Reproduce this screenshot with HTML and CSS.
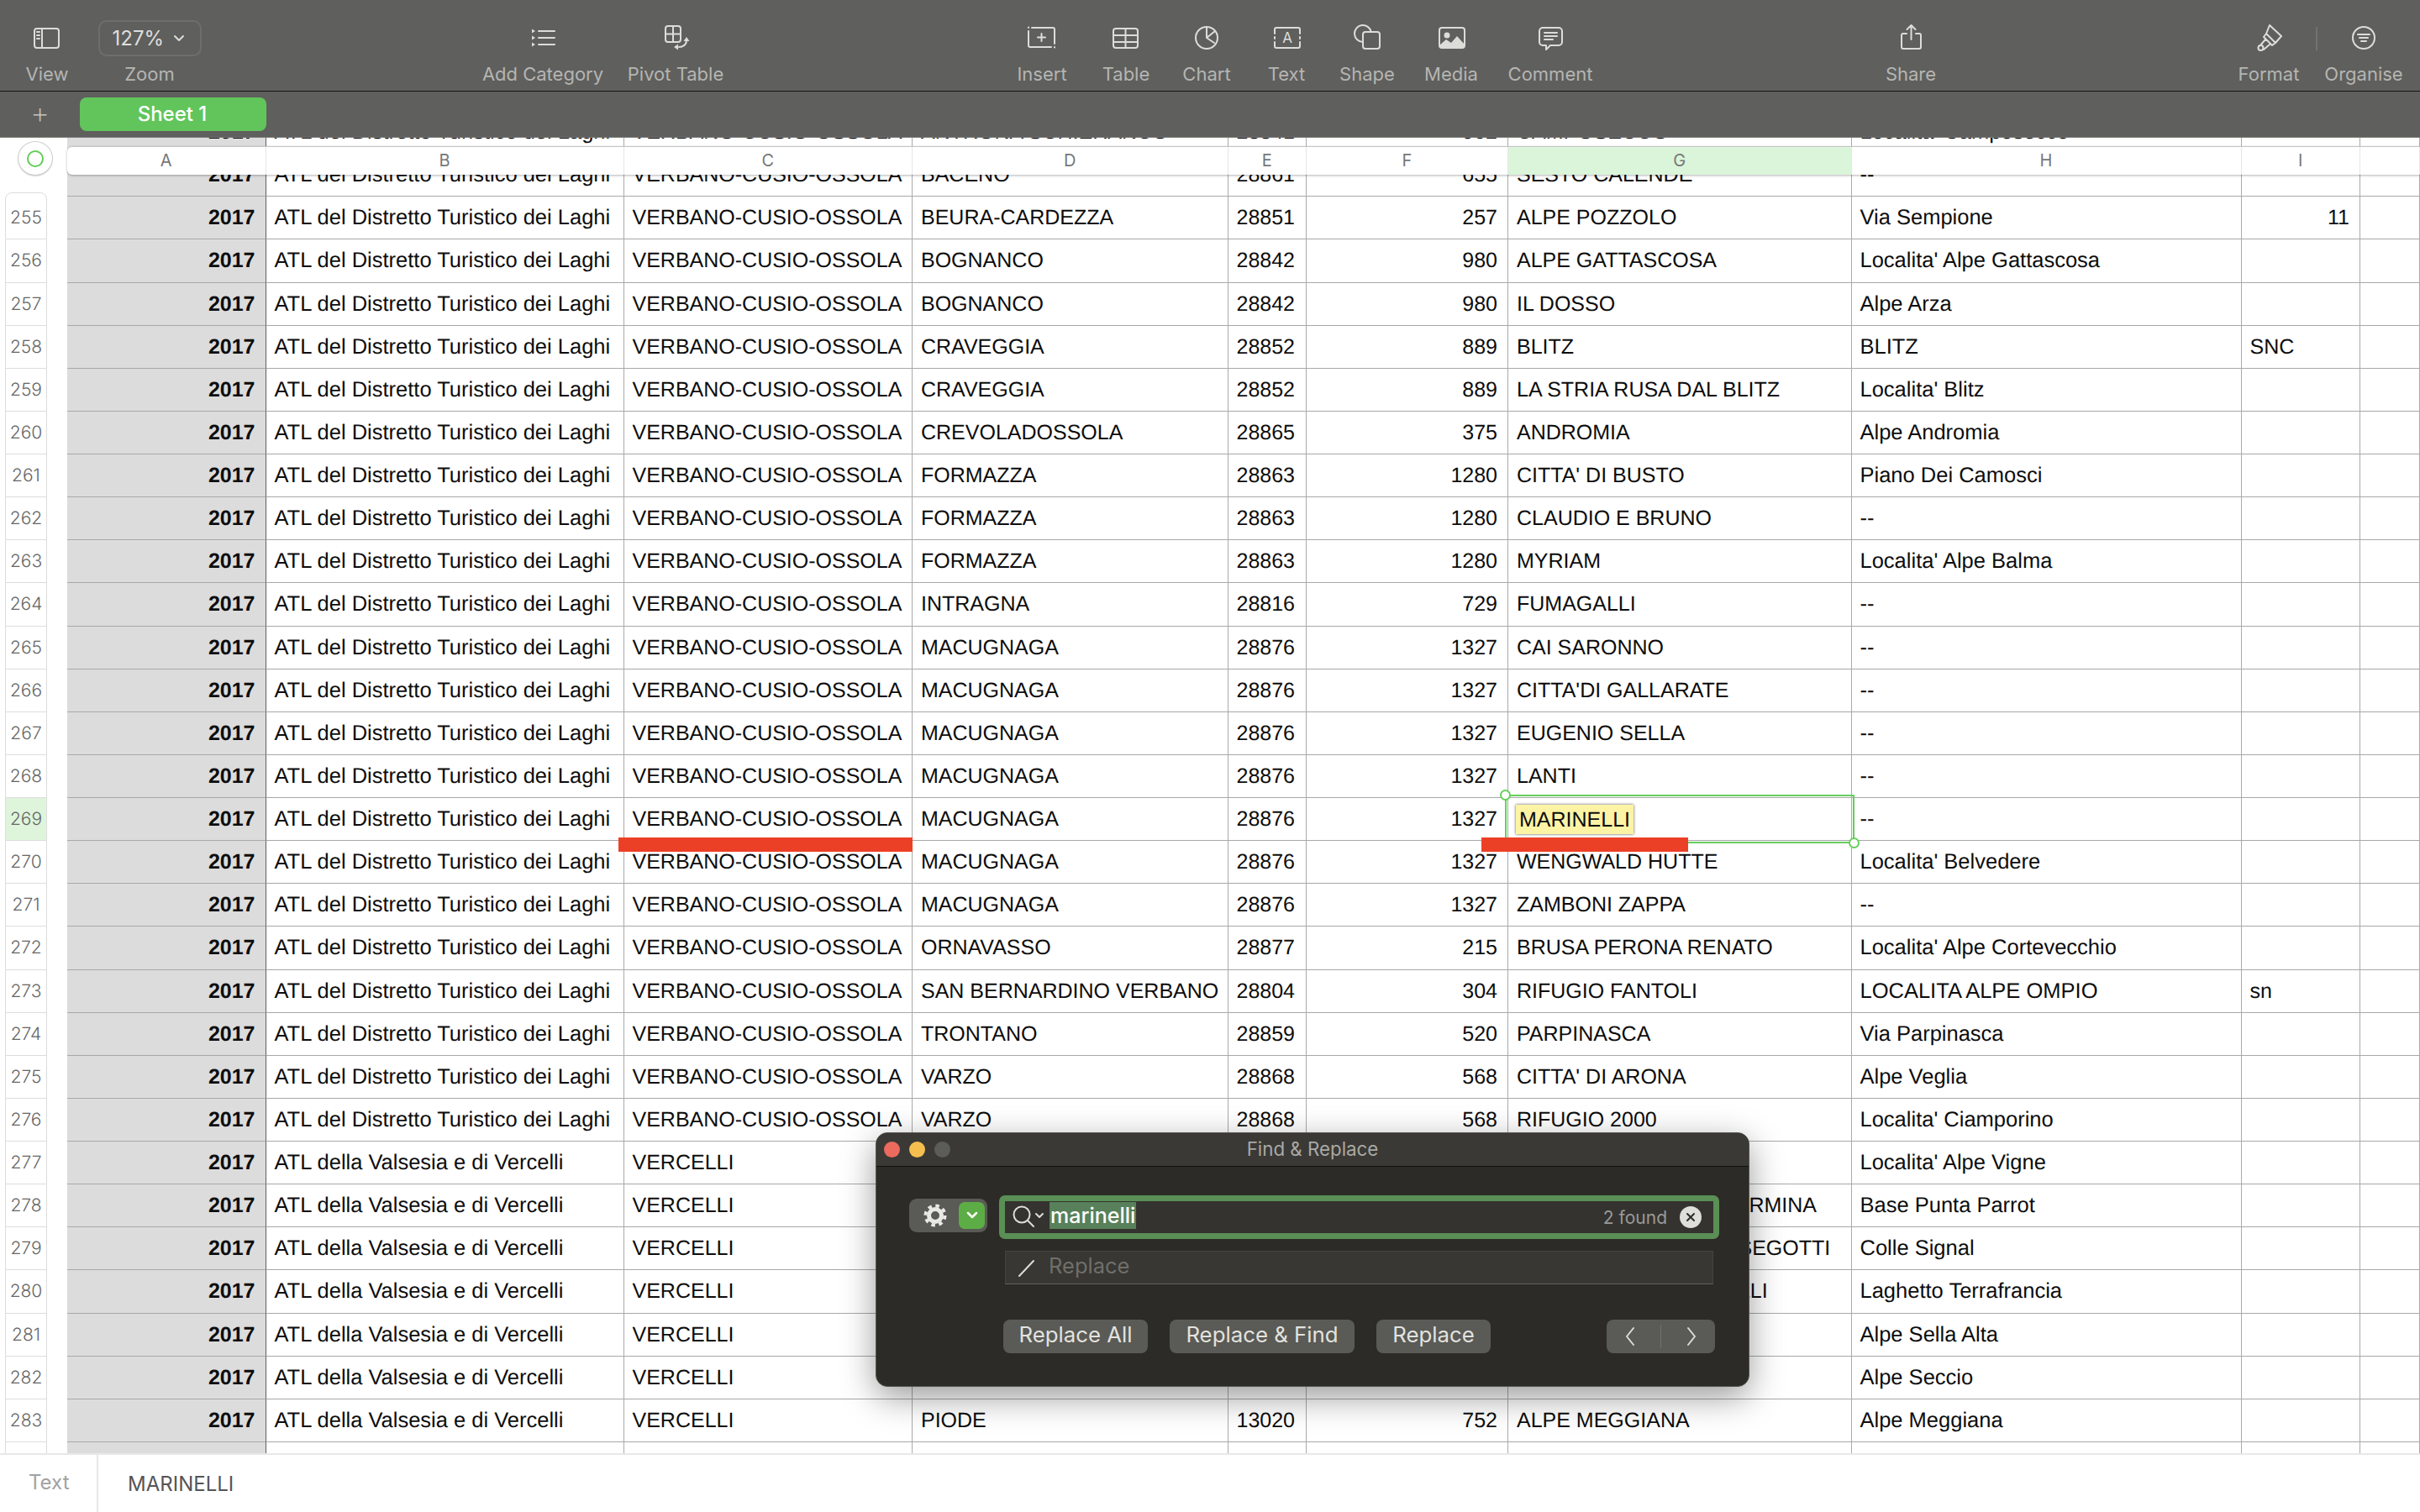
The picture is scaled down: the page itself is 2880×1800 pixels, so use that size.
FILE: index.html
```html
<!DOCTYPE html>
<html lang="en">
<head>
    <meta charset="UTF-8">
    <meta name="viewport" content="width=device-width, initial-scale=1.0">
    <link rel="stylesheet" href="styles.css">
    <title>Numbers - Find &amp; Replace</title>
</head>
<body>
<header class="toolbar">
    <div class="tool"><svg viewBox="0 0 40 36"><rect x="5" y="7" width="29" height="23" rx="3"/><path d="M14 7V30M8 11h3M8 15h3M8 19h3"/></svg><span>View</span></div>
    <div class="tool"><div class="zoom-box"><span>127%</span><svg viewBox="0 0 14 10"><path d="M2 2l5 5 5-5"/></svg></div><span>Zoom</span></div>
    <span></span>
    <div class="tool"><svg viewBox="0 0 40 36"><path d="M15 10H34M15 18H34M15 26H34"/><path class="solid" d="M7 7.5l4 2.5-4 2.5zM7 15.500l4 2.500-4 2.500zM7 23.500l4 2.500-4 2.500z"/></svg><span>Add Category</span></div>
    <div class="tool"><svg viewBox="0 0 40 36"><rect x="8" y="4" width="18" height="19" rx="3"/><path d="M17 4V23M8 13.500H26M33 21c0 5-4 8-9 8"/><path class="solid" d="M33 17l3.500 5h-7zM23 25.500v7l-5-3.500z"/></svg><span>Pivot Table</span></div>
    <span></span>
    <div class="tool"><svg viewBox="0 0 40 36"><path d="M8 6H33a2 2 0 0 1 2 2V25M4 10V27a2 2 0 0 0 2 2H31M4 5.500v.5M35 29v.5M19.500 13v9M15 17.500h9"/></svg><span>Insert</span></div>
    <div class="tool"><svg viewBox="0 0 40 36"><rect x="5" y="7" width="29" height="23" rx="3"/><path d="M5 15H34M5 23H34M19.500 7V30"/></svg><span>Table</span></div>
    <div class="tool"><svg viewBox="0 0 40 36"><circle cx="20" cy="18" r="13"/><path d="M20 5V18L29 24M20 18L30 10"/></svg><span>Chart</span></div>
    <div class="tool"><svg viewBox="0 0 40 36"><path d="M6 13V8a2 2 0 0 1 2-2H34a2 2 0 0 1 2 2v5M6 23v5a2 2 0 0 0 2 2H34a2 2 0 0 0 2-2v-5M6 17v2M36 17v2"/><text x="21" y="24" class="icon-letter">A</text></svg><span>Text</span></div>
    <div class="tool"><svg viewBox="0 0 40 36"><path d="M24.800 11A10 10 0 1 0 15 23"/><rect x="15" y="11" width="20" height="20" rx="3"/></svg><span>Shape</span></div>
    <div class="tool"><svg viewBox="0 0 40 36"><rect x="6" y="6" width="30" height="24" rx="3"/><circle class="solid" cx="15" cy="15" r="3.500"/><path class="solid" d="M6 27L14 20L20 24L27 16L36 26V27a3 3 0 0 1-3 3H9a3 3 0 0 1-3-3z"/></svg><span>Media</span></div>
    <div class="tool"><svg viewBox="0 0 40 36"><path d="M11 6H30a4 4 0 0 1 4 4V23a4 4 0 0 1-4 4H20L15 32V27H11a4 4 0 0 1-4-4V10a4 4 0 0 1 4-4zM13 12H28M13 16H28M13 20H23"/></svg><span>Comment</span></div>
    <span></span>
    <div class="tool"><svg viewBox="0 0 40 36"><path d="M15 13H11a2 2 0 0 0-2 2V29a2 2 0 0 0 2 2H30a2 2 0 0 0 2-2V15a2 2 0 0 0-2-2H26M20.500 3V20M15.500 8l5-5 5 5"/></svg><span>Share</span></div>
    <span></span>
    <div class="tool"><svg viewBox="0 0 40 36"><path d="M21 3L35 16L28 24L17 13zM17 13L14 17L24 27L28 24M16 20L10 27M21 26L14 32"/><circle cx="10.500" cy="30" r="3"/></svg><span>Format</span></div>
    <span class="tool-sep"></span>
    <div class="tool"><svg viewBox="0 0 40 36"><circle cx="20" cy="18" r="13"/><path d="M13 14H27M15 18H25M17 22H23"/></svg><span>Organise</span></div>
</header>

<nav class="sheetbar">
    <span class="add-sheet">+</span>
    <span class="sheet-tab">Sheet 1</span>
</nav>

<main class="sheet">
    <div class="grid">
        <div class="row"><div class="num hide"></div><div class="b">2017</div><div>ATL del Distretto Turistico dei Laghi</div><div>VERBANO-CUSIO-OSSOLA</div><div>ANTRONA SCHIERANCO</div><div>28841</div><div class="r">902</div><div>CAMPOSECCO</div><div>Localita' Camposecco</div><div></div><div></div></div>
        <div class="row"><div class="num hide"></div><div class="b">2017</div><div>ATL del Distretto Turistico dei Laghi</div><div>VERBANO-CUSIO-OSSOLA</div><div>BACENO</div><div>28861</div><div class="r">655</div><div>SESTO CALENDE</div><div>--</div><div></div><div></div></div>
        <div class="row"><div class="num first">255</div><div class="b">2017</div><div>ATL del Distretto Turistico dei Laghi</div><div>VERBANO-CUSIO-OSSOLA</div><div>BEURA-CARDEZZA</div><div>28851</div><div class="r">257</div><div>ALPE POZZOLO</div><div>Via Sempione</div><div class="r">11</div><div></div></div>
        <div class="row"><div class="num">256</div><div class="b">2017</div><div>ATL del Distretto Turistico dei Laghi</div><div>VERBANO-CUSIO-OSSOLA</div><div>BOGNANCO</div><div>28842</div><div class="r">980</div><div>ALPE GATTASCOSA</div><div>Localita' Alpe Gattascosa</div><div></div><div></div></div>
        <div class="row"><div class="num">257</div><div class="b">2017</div><div>ATL del Distretto Turistico dei Laghi</div><div>VERBANO-CUSIO-OSSOLA</div><div>BOGNANCO</div><div>28842</div><div class="r">980</div><div>IL DOSSO</div><div>Alpe Arza</div><div></div><div></div></div>
        <div class="row"><div class="num">258</div><div class="b">2017</div><div>ATL del Distretto Turistico dei Laghi</div><div>VERBANO-CUSIO-OSSOLA</div><div>CRAVEGGIA</div><div>28852</div><div class="r">889</div><div>BLITZ</div><div>BLITZ</div><div>SNC</div><div></div></div>
        <div class="row"><div class="num">259</div><div class="b">2017</div><div>ATL del Distretto Turistico dei Laghi</div><div>VERBANO-CUSIO-OSSOLA</div><div>CRAVEGGIA</div><div>28852</div><div class="r">889</div><div>LA STRIA RUSA DAL BLITZ</div><div>Localita' Blitz</div><div></div><div></div></div>
        <div class="row"><div class="num">260</div><div class="b">2017</div><div>ATL del Distretto Turistico dei Laghi</div><div>VERBANO-CUSIO-OSSOLA</div><div>CREVOLADOSSOLA</div><div>28865</div><div class="r">375</div><div>ANDROMIA</div><div>Alpe Andromia</div><div></div><div></div></div>
        <div class="row"><div class="num">261</div><div class="b">2017</div><div>ATL del Distretto Turistico dei Laghi</div><div>VERBANO-CUSIO-OSSOLA</div><div>FORMAZZA</div><div>28863</div><div class="r">1280</div><div>CITTA' DI BUSTO</div><div>Piano Dei Camosci</div><div></div><div></div></div>
        <div class="row"><div class="num">262</div><div class="b">2017</div><div>ATL del Distretto Turistico dei Laghi</div><div>VERBANO-CUSIO-OSSOLA</div><div>FORMAZZA</div><div>28863</div><div class="r">1280</div><div>CLAUDIO E BRUNO</div><div>--</div><div></div><div></div></div>
        <div class="row"><div class="num">263</div><div class="b">2017</div><div>ATL del Distretto Turistico dei Laghi</div><div>VERBANO-CUSIO-OSSOLA</div><div>FORMAZZA</div><div>28863</div><div class="r">1280</div><div>MYRIAM</div><div>Localita' Alpe Balma</div><div></div><div></div></div>
        <div class="row"><div class="num">264</div><div class="b">2017</div><div>ATL del Distretto Turistico dei Laghi</div><div>VERBANO-CUSIO-OSSOLA</div><div>INTRAGNA</div><div>28816</div><div class="r">729</div><div>FUMAGALLI</div><div>--</div><div></div><div></div></div>
        <div class="row"><div class="num">265</div><div class="b">2017</div><div>ATL del Distretto Turistico dei Laghi</div><div>VERBANO-CUSIO-OSSOLA</div><div>MACUGNAGA</div><div>28876</div><div class="r">1327</div><div>CAI SARONNO</div><div>--</div><div></div><div></div></div>
        <div class="row"><div class="num">266</div><div class="b">2017</div><div>ATL del Distretto Turistico dei Laghi</div><div>VERBANO-CUSIO-OSSOLA</div><div>MACUGNAGA</div><div>28876</div><div class="r">1327</div><div>CITTA'DI GALLARATE</div><div>--</div><div></div><div></div></div>
        <div class="row"><div class="num">267</div><div class="b">2017</div><div>ATL del Distretto Turistico dei Laghi</div><div>VERBANO-CUSIO-OSSOLA</div><div>MACUGNAGA</div><div>28876</div><div class="r">1327</div><div>EUGENIO SELLA</div><div>--</div><div></div><div></div></div>
        <div class="row"><div class="num">268</div><div class="b">2017</div><div>ATL del Distretto Turistico dei Laghi</div><div>VERBANO-CUSIO-OSSOLA</div><div>MACUGNAGA</div><div>28876</div><div class="r">1327</div><div>LANTI</div><div>--</div><div></div><div></div></div>
        <div class="row"><div class="num current">269</div><div class="b">2017</div><div>ATL del Distretto Turistico dei Laghi</div><div>VERBANO-CUSIO-OSSOLA</div><div>MACUGNAGA</div><div>28876</div><div class="r">1327</div><div><span class="found">MARINELLI</span></div><div>--</div><div></div><div></div></div>
        <div class="row"><div class="num">270</div><div class="b">2017</div><div>ATL del Distretto Turistico dei Laghi</div><div>VERBANO-CUSIO-OSSOLA</div><div>MACUGNAGA</div><div>28876</div><div class="r">1327</div><div>WENGWALD HUTTE</div><div>Localita' Belvedere</div><div></div><div></div></div>
        <div class="row"><div class="num">271</div><div class="b">2017</div><div>ATL del Distretto Turistico dei Laghi</div><div>VERBANO-CUSIO-OSSOLA</div><div>MACUGNAGA</div><div>28876</div><div class="r">1327</div><div>ZAMBONI ZAPPA</div><div>--</div><div></div><div></div></div>
        <div class="row"><div class="num">272</div><div class="b">2017</div><div>ATL del Distretto Turistico dei Laghi</div><div>VERBANO-CUSIO-OSSOLA</div><div>ORNAVASSO</div><div>28877</div><div class="r">215</div><div>BRUSA PERONA RENATO</div><div>Localita' Alpe Cortevecchio</div><div></div><div></div></div>
        <div class="row"><div class="num">273</div><div class="b">2017</div><div>ATL del Distretto Turistico dei Laghi</div><div>VERBANO-CUSIO-OSSOLA</div><div>SAN BERNARDINO VERBANO</div><div>28804</div><div class="r">304</div><div>RIFUGIO FANTOLI</div><div>LOCALITA ALPE OMPIO</div><div>sn</div><div></div></div>
        <div class="row"><div class="num">274</div><div class="b">2017</div><div>ATL del Distretto Turistico dei Laghi</div><div>VERBANO-CUSIO-OSSOLA</div><div>TRONTANO</div><div>28859</div><div class="r">520</div><div>PARPINASCA</div><div>Via Parpinasca</div><div></div><div></div></div>
        <div class="row"><div class="num">275</div><div class="b">2017</div><div>ATL del Distretto Turistico dei Laghi</div><div>VERBANO-CUSIO-OSSOLA</div><div>VARZO</div><div>28868</div><div class="r">568</div><div>CITTA' DI ARONA</div><div>Alpe Veglia</div><div></div><div></div></div>
        <div class="row"><div class="num">276</div><div class="b">2017</div><div>ATL del Distretto Turistico dei Laghi</div><div>VERBANO-CUSIO-OSSOLA</div><div>VARZO</div><div>28868</div><div class="r">568</div><div>RIFUGIO 2000</div><div>Localita' Ciamporino</div><div></div><div></div></div>
        <div class="row"><div class="num">277</div><div class="b">2017</div><div>ATL della Valsesia e di Vercelli</div><div>VERCELLI</div><div></div><div></div><div></div><div></div><div>Localita' Alpe Vigne</div><div></div><div></div></div>
        <div class="row"><div class="num">278</div><div class="b">2017</div><div>ATL della Valsesia e di Vercelli</div><div>VERCELLI</div><div></div><div></div><div></div><div>RIFUGIO GINO GUGLIERMINA</div><div>Base Punta Parrot</div><div></div><div></div></div>
        <div class="row"><div class="num">279</div><div class="b">2017</div><div>ATL della Valsesia e di Vercelli</div><div>VERCELLI</div><div></div><div></div><div></div><div>CAPANNA ENRICO RESEGOTTI</div><div>Colle Signal</div><div></div><div></div></div>
        <div class="row"><div class="num">280</div><div class="b">2017</div><div>ATL della Valsesia e di Vercelli</div><div>VERCELLI</div><div></div><div></div><div></div><div>RIFUGIO ROSSA E GALLI</div><div>Laghetto Terrafrancia</div><div></div><div></div></div>
        <div class="row"><div class="num">281</div><div class="b">2017</div><div>ATL della Valsesia e di Vercelli</div><div>VERCELLI</div><div></div><div></div><div></div><div></div><div>Alpe Sella Alta</div><div></div><div></div></div>
        <div class="row"><div class="num">282</div><div class="b">2017</div><div>ATL della Valsesia e di Vercelli</div><div>VERCELLI</div><div></div><div></div><div></div><div></div><div>Alpe Seccio</div><div></div><div></div></div>
        <div class="row"><div class="num">283</div><div class="b">2017</div><div>ATL della Valsesia e di Vercelli</div><div>VERCELLI</div><div>PIODE</div><div>13020</div><div class="r">752</div><div>ALPE MEGGIANA</div><div>Alpe Meggiana</div><div></div><div></div></div>
        <div class="row"><div class="num"></div><div class="b"></div><div></div><div></div><div></div><div></div><div></div><div></div><div></div><div></div><div></div></div>
    </div>

    <!-- floating bits over the table -->
    <div class="col-head">
        <div>A</div><div>B</div><div>C</div><div>D</div><div>E</div><div>F</div><div class="col-on">G</div><div>H</div><div>I</div><div></div>
    </div>
    <div class="corner"><span></span></div>
    <div class="selection"><i class="handle tl"></i><i class="handle br"></i></div>
    <div class="redbar bar-c"></div>
    <div class="redbar bar-g"></div>

    <section class="dialog">
        <div class="dialog-title">
            <i class="light red"></i><i class="light yellow"></i><i class="light off"></i>
            <span>Find &amp; Replace</span>
        </div>
        <div class="dialog-body">
            <div class="gear-btn">
                <svg class="gear" viewBox="0 0 28 28"><circle cx="14" cy="14" r="11.500" stroke-dasharray="4.500 4.530"/><circle cx="14" cy="14" r="7.500"/></svg>
                <span class="gear-arrow"><svg viewBox="0 0 14 10"><path d="M2 2l5 5 5-5"/></svg></span>
            </div>
            <div class="fields">
                <div class="find-field">
                    <svg class="find-icon" viewBox="0 0 40 32"><circle cx="13" cy="13" r="9.500"/><path d="M20 20L27 27M30 12l4 4 4-4"/></svg>
                    <span class="find-text">marinelli</span>
                    <span class="find-count">2 found</span>
                    <span class="find-clear"><svg viewBox="0 0 12 12"><path d="M2 2L10 10M10 2L2 10"/></svg></span>
                </div>
                <div class="replace-field">
                    <svg class="pen-icon" viewBox="0 0 24 24"><path d="M3 22L20 4"/></svg>
                    <span>Replace</span>
                </div>
                <div class="dialog-buttons">
                    <button class="btn-all">Replace All</button>
                    <button class="btn-find">Replace &amp; Find</button>
                    <button class="btn-one">Replace</button>
                    <div class="nav-btns">
                        <svg viewBox="0 0 12 24"><path d="M10 2L2 12L10 22"/></svg>
                        <i></i>
                        <svg viewBox="0 0 12 24"><path d="M2 2L10 12L2 22"/></svg>
                    </div>
                </div>
            </div>
        </div>
    </section>
</main>

<footer class="formula">
    <span class="formula-type">Text</span>
    <span class="formula-value">MARINELLI</span>
</footer>
</body>
</html>
```

FILE: styles.css
```css
body{
    margin: 0;
    height: 1800px;
    overflow: hidden;
    display: flex;
    flex-direction: column;
    background-color: #fff;
    font-family: 'Inter', sans-serif;
}

/* toolbar */
.toolbar{
    height: 108px;
    flex: none;
    display: grid;
    grid-template-columns: 112px 132px 317px 170px 146px 313px 100px 100px 92px 98px 94px 106px 130px 314px 100px 320px 112px 2px 110px;
    background-color: #5f5f5d;
    border-bottom: 1px solid #141414;
    position: relative;
    z-index: 3;
}
.tool{
    display: flex;
    flex-direction: column;
    align-items: center;
    padding-top: 27px;
    font-size: 22px;
    line-height: 28px;
    color: #b5b5b2;
    white-space: nowrap;
}
.tool > span{
    margin-top: 11px;
}
.tool > svg{
    width: 40px;
    height: 36px;
}
svg{
    fill: none;
    stroke: #dcdcd9;
    stroke-width: 2;
    stroke-linecap: round;
    stroke-linejoin: round;
}
svg .solid{
    fill: #dcdcd9;
    stroke: none;
}
.icon-letter{
    fill: #dcdcd9;
    stroke: none;
    font-size: 17px;
    text-anchor: middle;
    font-family: 'Inter', sans-serif;
}
.zoom-box{
    width: 123px;
    height: 43px;
    margin-top: -3px;
    margin-bottom: -4px;
    box-sizing: border-box;
    border: 2px solid #6e6e6b;
    border-radius: 10px;
    display: flex;
    align-items: center;
    gap: 11px;
    padding-left: 15px;
    color: #dedeDb;
    font-size: 24px;
}
.zoom-box svg{
    width: 14px;
    height: 10px;
}
.tool-sep{
    margin-top: 32px;
    height: 28px;
    background-color: #72726f;
}

/* sheet tabs */
.sheetbar{
    height: 54px;
    flex: none;
    display: flex;
    align-items: center;
    background-color: #5f5f5d;
    border-bottom: 1px solid #7b7b78;
    position: relative;
    z-index: 3;
}
.add-sheet{
    width: 95px;
    text-align: center;
    font-size: 36px;
    font-weight: 200;
    color: #c4c4c1;
    margin-top: -4px;
}
.sheet-tab{
    width: 222px;
    height: 40px;
    padding-right: 2px;
    box-sizing: border-box;
    border-radius: 8px;
    background-color: #61c55c;
    color: #fff;
    font-size: 24px;
    font-weight: 500;
    line-height: 40px;
    text-align: center;
}

/* table */
.sheet{
    flex: 1;
    position: relative;
    overflow: hidden;
}
.grid{
    margin-top: -32px;
    font-family: 'Liberation Sans', Arial, sans-serif;
    font-size: 25px;
    text-rendering: geometricPrecision;
    color: #0d0d0d;
}
.row{
    height: 51.14px;
    padding-left: 6px;
    display: grid;
    grid-template-columns: 50px 24px 236.5px 426px 343.5px 375.500px 93.5px 240px 408.5px 464px 141.5px 71px;
}
.row > div{
    box-sizing: border-box;
    border-right: 1px solid #aaa;
    border-bottom: 1px solid #a8a8a8;
    padding: 0 10px;
    line-height: 51px;
    white-space: nowrap;
    overflow: hidden;
}
.row > div:nth-child(2){
    grid-column: 3;
    background-color: #dcdcdc;
    border-right-color: #606060;
}
.row > div:nth-child(3),
.row > div:nth-child(9){
    font-size: 25.5px;
}
.row > .b{
    font-weight: bold;
    text-align: right;
    padding-right: 12px;
}
.row > .r{
    text-align: right;
    padding-right: 12px;
}
.row > .num{
    padding: 0;
    font-family: 'Inter', sans-serif;
    font-size: 21px;
    font-weight: 300;
    color: #666;
    text-align: center;
    border-left: 1px solid #ddd;
    border-right: 1px solid #ddd;
    border-bottom: 1px solid #ddd;
}
.row > .num.hide{
    border: none;
}
.row > .num.first{
    margin-top: -5px;
    line-height: 60px;
    border-top: 1px solid #ddd;
    border-radius: 8px 8px 0 0;
}
.row > .num.current{
    background-color: #def5dc;
}
.found{
    display: inline-block;
    margin-left: -1px;
    margin-bottom: 2px;
    padding: 0 4px;
    height: 35px;
    line-height: 36px;
    background-color: #fdf3a5;
    box-shadow: 0 0 3px #555;
    vertical-align: middle;
}

/* column letters */
.col-head{
    position: absolute;
    top: 10px;
    left: 80px;
    right: 0;
    height: 33px;
    display: grid;
    grid-template-columns: 236.5px 426px 343.5px 375.500px 93.5px 240px 408.5px 464px 141.5px 71px;
    background-color: #fff;
    border-top: 1px solid #c4c4c4;
    border-radius: 6px 0 0 6px;
    box-shadow: 0 1px 3px rgba(0, 0, 0, .3);
    font-size: 20px;
    line-height: 33px;
    color: #777;
    text-align: center;
}
.col-head div{
    border-right: 1px solid #e6e6e6;
}
.col-head .col-on{
    background-color: #dbf5da;
}
.corner{
    position: absolute;
    top: 4px;
    left: 21px;
    width: 42px;
    height: 41px;
    box-sizing: border-box;
    border: 1px solid #ccc;
    border-radius: 50%;
    background-color: #fff;
    box-shadow: 0 1px 1px rgba(0, 0, 0, .15);
    display: flex;
    align-items: center;
    justify-content: center;
}
.corner span{
    width: 20px;
    height: 20px;
    box-sizing: border-box;
    border: 2.5px solid #62cc58;
    border-radius: 50%;
}

/* selected cell */
.selection{
    position: absolute;
    left: 1791px;
    top: 782px;
    width: 416px;
    height: 58px;
    box-sizing: border-box;
    border: 2.5px solid #66cf5c;
}
.handle{
    position: absolute;
    width: 13px;
    height: 13px;
    box-sizing: border-box;
    border: 2.5px solid #66cf5c;
    border-radius: 50%;
    background-color: #fff;
}
.handle.tl{
    left: -8px;
    top: -8px;
}
.handle.br{
    right: -8px;
    bottom: -8px;
}
.redbar{
    position: absolute;
    top: 833px;
    height: 17px;
    background-color: #ec4026;
}
.bar-c{
    left: 736px;
    width: 350px;
}
.bar-g{
    left: 1763px;
    width: 246px;
}

/* find and replace panel */
.dialog{
    position: absolute;
    left: 1042px;
    top: 1184px;
    width: 1040px;
    height: 303px;
    box-sizing: border-box;
    border-radius: 14px;
    border: 1px solid #55554f;
    background-color: #2c2b27;
    box-shadow: 0 12px 40px rgba(0, 0, 0, .4);
    overflow: hidden;
    color: #dfdfdb;
}
.dialog-title{
    height: 39px;
    display: flex;
    align-items: center;
    gap: 11px;
    padding-left: 9px;
    position: relative;
    background-color: #3a3935;
    border-bottom: 1px solid #111;
}
.dialog-title span{
    position: absolute;
    left: 0;
    right: 0;
    margin-top: -3px;
    text-align: center;
    font-size: 22.3px;
    color: #a9a9a5;
}
.light{
    width: 19px;
    height: 19px;
    border-radius: 50%;
}
.red{
    background-color: #ec6a5e;
}
.yellow{
    background-color: #f5bf4f;
}
.off{
    background-color: #5c5c58;
}
.dialog-body{
    display: flex;
    align-items: flex-start;
    gap: 14px;
    padding: 34px 0 0 39px;
}
.gear-btn{
    width: 93px;
    height: 40px;
    margin-top: 4px;
    border-radius: 9px;
    background-color: #5a5a56;
    display: flex;
    align-items: center;
}
.gear{
    width: 28px;
    height: 28px;
    margin-left: 17px;
    stroke: #e8e8e5;
}
.gear circle:first-child{
    stroke-width: 4;
    stroke-linecap: butt;
}
.gear circle:last-child{
    stroke-width: 5;
}
.gear-arrow{
    width: 31px;
    height: 32px;
    margin-left: 14px;
    border-radius: 7px;
    background-color: #5cad45;
    display: flex;
    align-items: center;
    justify-content: center;
}
.gear-arrow svg{
    width: 14px;
    height: 10px;
    stroke: #fff;
    stroke-width: 2.5;
}
.fields{
    width: 857px;
}
.find-field{
    height: 52px;
    box-sizing: border-box;
    border: 7px solid #5a8f55;
    border-radius: 7px;
    background-color: #343330;
    display: flex;
    align-items: center;
    font-size: 26px;
}
.find-icon{
    width: 40px;
    height: 32px;
    margin-left: 7px;
    flex: none;
}
.find-text{
    height: 32px;
    line-height: 32px;
    margin: 0 0 4px 6px;
    padding: 0 1px;
    background-color: #58805a;
    color: #fff;
    font-size: 25px;
    font-weight: 500;
}
.find-count{
    margin-left: auto;
    font-size: 21px;
    color: #9a9a96;
}
.find-clear{
    width: 26px;
    height: 26px;
    margin: 0 14px 0 15px;
    border-radius: 50%;
    background-color: #dedeDb;
    display: flex;
    align-items: center;
    justify-content: center;
}
.find-clear svg{
    width: 12px;
    height: 12px;
    stroke: #2c2b27;
    stroke-width: 2;
}
.replace-field{
    height: 40px;
    margin: 14px 7px 0;
    box-sizing: border-box;
    background-color: #383733;
    border: 1px solid #44443f;
    border-bottom-color: #62625d;
    display: flex;
    align-items: center;
    gap: 14px;
    padding-left: 13px;
    font-size: 25.5px;
    color: #6f6f6b;
}
.replace-field span{
    margin-bottom: 5px;
}
.pen-icon{
    width: 24px;
    height: 24px;
}
.dialog-buttons{
    display: flex;
    margin: 42px 5px 0;
    gap: 26px;
}
button{
    height: 40px;
    border: none;
    border-radius: 8px;
    background-color: #5a5a56;
    color: #e2e2de;
    font-family: 'Inter', sans-serif;
    font-size: 25.8px;
    padding: 0 0 6px;
}
.btn-all{
    width: 172px;
}
.btn-find{
    width: 220px;
}
.btn-one{
    width: 136px;
}
.nav-btns{
    width: 129px;
    height: 40px;
    margin-left: auto;
    border-radius: 8px;
    background-color: #5a5a56;
    display: flex;
    align-items: center;
    justify-content: space-between;
    padding: 0 22px;
    box-sizing: border-box;
}
.nav-btns svg{
    width: 12px;
    height: 24px;
}
.nav-btns i{
    width: 1px;
    height: 28px;
    background-color: #70706c;
}

/* formula line */
.formula{
    height: 70px;
    flex: none;
    box-sizing: border-box;
    border-top: 2px solid #e8e8e8;
    background-color: #fff;
    display: flex;
    align-items: center;
    font-size: 24px;
    position: relative;
    z-index: 3;
}
.formula-type{
    width: 117px;
    height: 100%;
    box-sizing: border-box;
    border-right: 2px solid #e8e8e8;
    padding-left: 34px;
    line-height: 66px;
    color: #a2a2a2;
}
.formula-value{
    margin-left: 35px;
    color: #555;
}
```
